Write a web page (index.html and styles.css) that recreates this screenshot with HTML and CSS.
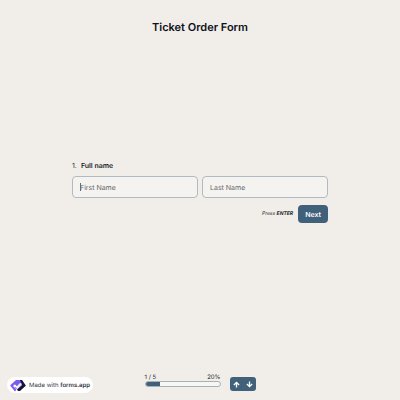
FILE: index.html
```html
<!DOCTYPE html>
<html lang="en">
<head>
    <meta charset="UTF-8">
    <meta name="viewport" content="width=device-width, initial-scale=1.0">
    <title>Ticket Order Form</title>
    <link rel="stylesheet" href="styles.css">
</head>
<body>
    <header>
        <h1>Ticket Order Form</h1>
    </header>

    <main>
        <form class="question">
            <fieldset>
                <legend><span class="number">1.</span>Full name</legend>
                <div class="fields">
                    <div class="field active">
                        <input type="text" name="first" placeholder="First Name" aria-label="First Name">
                    </div>
                    <div class="field">
                        <input type="text" name="last" placeholder="Last Name" aria-label="Last Name">
                    </div>
                </div>
            </fieldset>
            <div class="actions">
                <span class="hint">Press <b>ENTER</b></span>
                <button type="submit" class="next">Next</button>
            </div>
        </form>
    </main>

    <footer>
        <a class="badge" href="#">
            <svg class="logo" viewBox="0 0 32 26" aria-hidden="true">
                <path d="M20 2h4l7 10q1 1 0 2l-11 10h-4l-2-3 10-9-5-7z" fill="#15143a"/>
                <path d="M12 2h7l3 4-9 9-4-4-3 3 7 7-3 4-9-11q-1-1 0-2z" fill="#7a5cf5"/>
                <path d="M13 20l-4-4 4-1 9-8 2 3z" fill="#7a5cf5"/>
                <path d="M9 12l5 5 8-8" fill="none" stroke="#fff" stroke-width="3"/>
            </svg>
            <span>Made with <b>forms.app</b></span>
        </a>
        <div class="controls">
            <div class="progress">
                <div class="progress-labels">
                    <span>1 / 5</span>
                    <span>20%</span>
                </div>
                <div class="track">
                    <div class="fill" style="width: 20%"></div>
                </div>
            </div>
            <div class="arrows">
                <button type="button" aria-label="Previous question">
                    <svg viewBox="0 0 16 16"><path d="M8 15V3M2 9l6-6 6 6"/></svg>
                </button>
                <button type="button" aria-label="Next question">
                    <svg viewBox="0 0 16 16"><path d="M8 1v12M2 7l6 6 6-6"/></svg>
                </button>
            </div>
        </div>
    </footer>
</body>
</html>
```

FILE: styles.css
```css
* {
    box-sizing: border-box;
}
body {
    font-family: Inter, 'Liberation Sans', sans-serif;
    font-size: 7px;
    text-rendering: geometricPrecision;
    margin: 0;
    min-height: 100vh;
    display: flex;
    flex-direction: column;
    background-color: #f1eee9;
    color: #1b1e2b;
}
header {
    padding: 20px 16px;
    text-align: center;
}
h1 {
    margin: 0;
    font-size: 11px;
    line-height: 14px;
    font-weight: 600;
    color: #0e1020;
}
main {
    flex: 1;
    display: flex;
    align-items: center;
    justify-content: center;
    padding: 0 16px 44px;
}
.question {
    width: 100%;
    max-width: 256px;
}
fieldset {
    border: 0;
    margin: 0;
    padding: 0;
    min-width: 0;
}
legend {
    padding: 0;
    margin-bottom: 5px;
    line-height: 10px;
    font-weight: 600;
}
.number {
    margin-right: 4px;
    font-weight: 400;
}
.fields {
    display: flex;
    gap: 4px;
}
.field {
    flex: 1;
    position: relative;
}
.field input {
    display: block;
    width: 100%;
    height: 22px;
    padding: 0 7px;
    border: 1px solid #b1bac3;
    border-radius: 4px;
    background-color: #f5f3ef;
    font: inherit;
    color: inherit;
    text-rendering: inherit;
    outline: none;
}
.field input::placeholder {
    color: #66676c;
    opacity: 1;
}
/* text cursor of the active field */
.active::after {
    content: '';
    position: absolute;
    left: 8px;
    top: 7px;
    width: 1px;
    height: 8px;
    background-color: #6a6c74;
}
.actions {
    display: flex;
    align-items: center;
    justify-content: flex-end;
    gap: 5px;
    margin-top: 7px;
}
.hint {
    font-size: 5px;
    font-style: italic;
}
.hint b {
    font-weight: 700;
}
button {
    border: 0;
    padding: 0;
    background-color: #41607a;
    color: #fff;
    font: inherit;
    text-rendering: inherit;
}
.next {
    height: 18px;
    padding: 0 7px;
    border-radius: 4px;
    font-weight: 600;
}
footer {
    display: grid;
    grid-template-columns: 1fr auto 1fr;
    align-items: end;
    padding: 0 7px 7px;
}
.badge {
    justify-self: start;
    display: flex;
    align-items: center;
    gap: 3px;
    height: 16px;
    padding: 0 3px;
    border-radius: 8px;
    background-color: #fff;
    color: #33343f;
    font-size: 6px;
    text-decoration: none;
    white-space: nowrap;
}
.badge b {
    font-weight: 600;
}
.logo {
    width: 16px;
    height: 13px;
}
.controls {
    display: flex;
    align-items: flex-end;
    gap: 9px;
    margin-bottom: 2px;
}
.progress {
    width: 76px;
    margin-bottom: 4px;
}
.progress-labels {
    display: flex;
    justify-content: space-between;
    font-size: 6px;
    line-height: 7px;
}
.track {
    height: 6px;
    border: 1px solid #a5b1bb;
    border-radius: 3px;
    background-color: #f7f6f3;
    overflow: hidden;
}
.fill {
    height: 100%;
    background-color: #41607a;
}
.arrows {
    display: flex;
    border-radius: 3px;
    overflow: hidden;
}
.arrows button {
    display: flex;
    align-items: center;
    justify-content: center;
    width: 13px;
    height: 14px;
}
.arrows svg {
    width: 7px;
    height: 7px;
    fill: none;
    stroke: #fff;
    stroke-width: 3;
}
```
